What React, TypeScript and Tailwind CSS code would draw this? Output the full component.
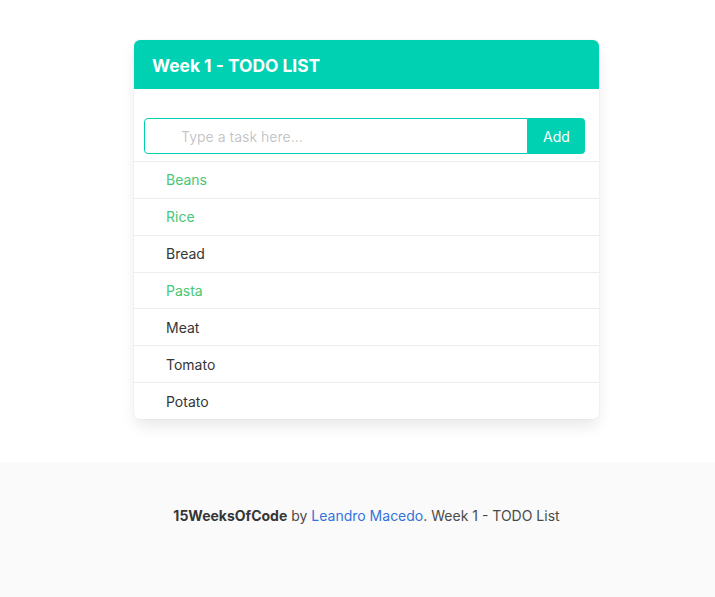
import { useState } from 'react';

type Task = { id: number; name: string; done: boolean };

const initialTasks: Task[] = [
  { id: 1, name: 'Beans', done: true },
  { id: 2, name: 'Rice', done: true },
  { id: 3, name: 'Bread', done: false },
  { id: 4, name: 'Pasta', done: true },
  { id: 5, name: 'Meat', done: false },
  { id: 6, name: 'Tomato', done: false },
  { id: 7, name: 'Potato', done: false },
];

export default function App() {
  const [tasks, setTasks] = useState<Task[]>(initialTasks);
  const [text, setText] = useState('');

  const addTask = () => {
    if (!text.trim()) return;
    setTasks([...tasks, { id: Date.now(), name: text.trim(), done: false }]);
    setText('');
  };

  const toggle = (id: number) => {
    setTasks(tasks.map((t) => (t.id === id ? { ...t, done: !t.done } : t)));
  };

  return (
    <div className="min-h-[597px] bg-white flex flex-col font-['Inter','Liberation_Sans',sans-serif] text-[#4a4a4a]">
      <section className="pt-[40px] pb-[43px] pl-[18px] flex justify-center">
        <div className="w-[465px] bg-white rounded-[6px] shadow-[0_8px_16px_-2px_rgba(10,10,10,0.1),0_0_0_1px_rgba(10,10,10,0.02)] overflow-hidden">
          <header className="h-[49px] bg-[#00d1b2] flex items-center pl-[18px] pt-[3px]">
            <h1 className="text-white text-[17.4px] font-bold">Week 1 - TODO LIST</h1>
          </header>
          <div className="pt-[29px] pb-[7px] pl-[10px] pr-[14px]">
            <div className="flex h-[36px]">
              <input
                value={text}
                onChange={(e) => setText(e.target.value)}
                onKeyDown={(e) => e.key === 'Enter' && addTask()}
                placeholder="Type a task here..."
                className="flex-1 min-w-0 border border-[#00d1b2] rounded-l-[4px] pl-[36px] pr-3 text-[14px] text-[#363636] outline-none placeholder:text-[#363636]/30"
              />
              <button
                onClick={addTask}
                className="w-[57px] bg-[#00d1b2] text-white text-[14px] rounded-r-[4px]"
              >
                Add
              </button>
            </div>
          </div>
          <ul>
            {tasks.map((task) => (
              <li
                key={task.id}
                onClick={() => toggle(task.id)}
                className={`h-[36.86px] border-t border-[#ededed] flex items-center pl-[32px] text-[14px] cursor-pointer ${
                  task.done ? 'text-[#48c774]' : 'text-[#363636]'
                }`}
              >
                {task.name}
              </li>
            ))}
          </ul>
        </div>
      </section>
      <footer className="flex-1 bg-[#fafafa] pt-[43px] pl-[18px] text-center text-[14px] text-[#4a4a4a]">
        <p>
          <strong className="text-[#363636] font-bold">15WeeksOfCode</strong> by{' '}
          <a href="#" className="text-[#3273dc]">Leandro Macedo</a>. Week 1 - TODO List
        </p>
      </footer>
    </div>
  );
}
